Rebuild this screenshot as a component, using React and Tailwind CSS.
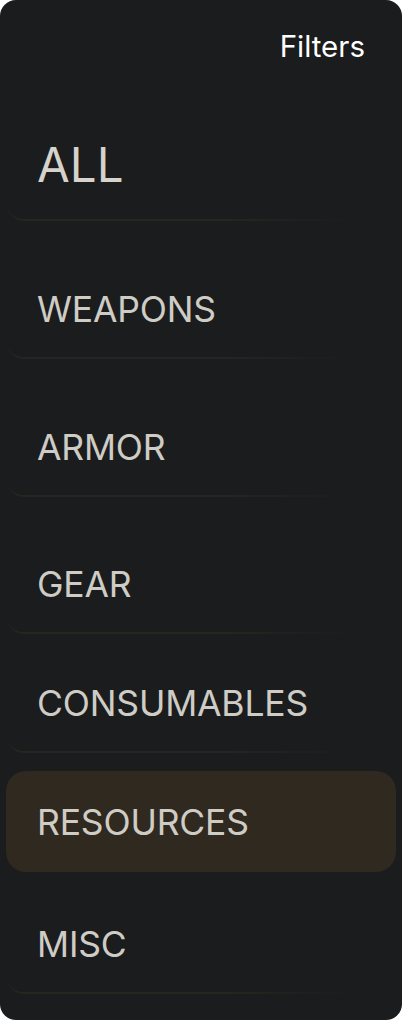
import React from "react";

const items = [
  { label: "WEAPONS", mt: "mt-[37px]", active: false },
  { label: "ARMOR", mt: "mt-[37px]", active: false },
  { label: "GEAR", mt: "mt-[36px]", active: false },
  { label: "CONSUMABLES", mt: "mt-[18px]", active: false },
  { label: "RESOURCES", mt: "mt-[18px]", active: true },
  { label: "MISC", mt: "mt-[21px]", active: false },
];

const lineCls =
  "after:content-[''] after:absolute after:inset-0 after:pointer-events-none after:rounded-bl-[18px] after:border-b-2 after:border-[#25261f] after:[mask-image:linear-gradient(to_right,black_58%,transparent_92%)]";

export default function App() {
  return (
    <div
      className="w-[402px] h-[1020px] bg-[#1a1c1e] rounded-2xl overflow-hidden flex flex-col"
      style={{ fontFamily: "Inter, 'Noto Sans', sans-serif" }}
    >
      <div className="flex justify-end pr-[37px] pt-[32px]">
        <span className="text-[29.5px] leading-[29px] text-white">Filters</span>
      </div>
      <div className={`relative mx-[6px] mt-[45px] pl-[31px] pt-[34px] pb-[32px] ${lineCls}`}>
        <span className="block text-[47.5px] leading-[49px] text-[#d6d2cc]">ALL</span>
      </div>
      {items.map((it) => (
        <div
          key={it.label}
          className={`relative mx-[6px] ${it.mt} pl-[31px] pt-[34px] pb-[31px] rounded-[20px] ${
            it.active ? "bg-[#2f2920]" : lineCls
          }`}
        >
          <span className="block text-[35.5px] leading-[36px] tracking-[-0.005em] text-[#cfccc5]">{it.label}</span>
        </div>
      ))}
    </div>
  );
}
